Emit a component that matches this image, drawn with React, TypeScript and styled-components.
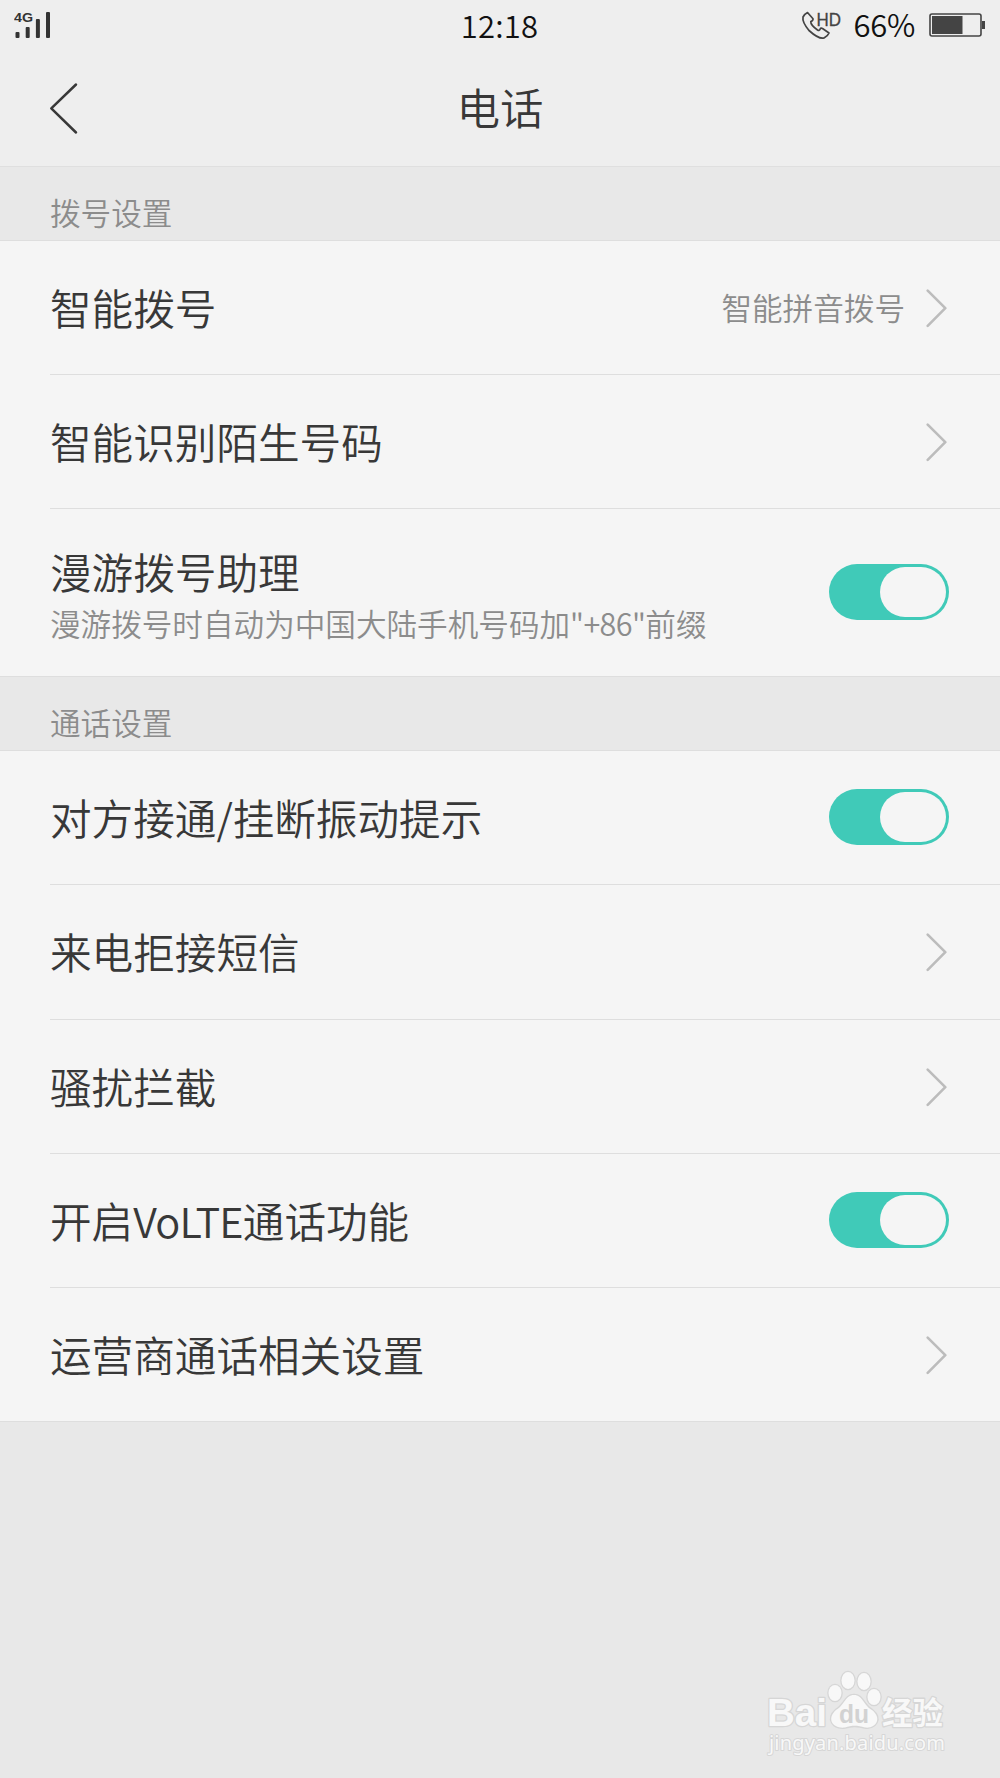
import React, { useState } from "react";
import styled, { createGlobalStyle } from "styled-components";

const GlobalStyle = createGlobalStyle`
  * { box-sizing: border-box; }
  body {
    margin: 0;
    background: #e8e8e8;
    font-family: "Noto Sans CJK SC", sans-serif;
    font-weight: 350;
    color: #383838;
  }
`;

const Screen = styled.div`
  display: flex;
  flex-direction: column;
  width: 1000px;
  height: 1778px;
  background: #e8e8e8;
  overflow: hidden;
`;

const Header = styled.header`
  height: 167px;
  background: #eeeeee;
  border-bottom: 1px solid #dfdfdf;
`;

const StatusBar = styled.div`
  display: grid;
  grid-template-columns: 1fr auto 1fr;
  height: 52px;
  padding: 0 15px 0 14px;
`;

const Clock = styled.span`
  font-size: 31px;
  line-height: 50px;
  letter-spacing: 0.2px;
  color: #111;
`;

const StatusRight = styled.div`
  display: flex;
  justify-content: flex-end;
  align-items: flex-start;
`;

const Percent = styled.span`
  font-size: 31px;
  line-height: 48px;
  letter-spacing: -0.3px;
  color: #111;
  margin: 0 14px 0 11px;
`;

const TitleBar = styled.div`
  display: grid;
  grid-template-columns: 100px 1fr 100px;
  height: 114px;
`;

const BackButton = styled.button`
  display: flex;
  border: 0;
  padding: 29px 0 0 48px;
  background: none;
`;

const Title = styled.h1`
  margin: 0;
  font-size: 43.5px;
  line-height: 110px;
  font-weight: 350;
  text-align: center;
`;

const SectionLabel = styled.h2`
  height: 74px;
  margin: 0;
  padding: 20px 0 0 50px;
  border-bottom: 1px solid #dedede;
  font-size: 30.6px;
  line-height: 50px;
  font-weight: 350;
  color: #8c8c8c;
`;

const List = styled.div`
  display: flex;
  flex-direction: column;
  background: #f5f5f5;
  border-bottom: 1px solid #dedede;
  padding-left: 50px;
`;

const Row = styled.div<{ $height: number }>`
  display: flex;
  align-items: center;
  justify-content: space-between;
  height: ${(p) => p.$height}px;
  padding-right: 51px;
  & + & { border-top: 1px solid #dedede; }
`;

const Texts = styled.div<{ $double: boolean }>`
  display: flex;
  flex-direction: column;
  white-space: nowrap;
  gap: 3px;
  padding-top: ${(p) => (p.$double ? 5 : 0)}px;
  padding-bottom: ${(p) => (p.$double ? 0 : 2)}px;
`;

const Label = styled.span`
  font-size: 41.6px;
  line-height: 52px;
`;

const Hint = styled.span`
  font-size: 30.6px;
  line-height: 46px;
  color: #8c8c8c;
`;

const Latin = styled.span`
  letter-spacing: -0.02em;
`;

const Value = styled(Hint)`
  padding-bottom: 2px;
`;

const Side = styled.div`
  display: flex;
  align-items: center;
  gap: 21px;
`;

const Toggle = styled.button<{ $on: boolean }>`
  display: flex;
  justify-content: ${(p) => (p.$on ? "flex-end" : "flex-start")};
  width: 120px;
  height: 56px;
  margin-bottom: 2px;
  padding: 3px;
  border: 0;
  border-radius: 28px;
  background: ${(p) => (p.$on ? "#40cab8" : "#cccccc")};
`;

const Knob = styled.span`
  width: 66px;
  height: 50px;
  border-radius: 25px;
  background: #f5f5f5;
`;

const Footer = styled.footer`
  display: flex;
  flex: 1;
  justify-content: flex-end;
  align-items: flex-end;
  padding: 0 50px 18px 0;
`;

const Signal = () => (
  <svg width="40" height="52" fill="#333">
    <text x="0" y="22" fontFamily="Liberation Sans" fontWeight="700" fontSize="13.5" textLength="19" lengthAdjust="spacingAndGlyphs">4G</text>
    <rect x="1.5" y="32" width="4" height="6" rx="1" />
    <rect x="11.7" y="27" width="4" height="11" rx="1" />
    <rect x="21.9" y="19" width="4" height="19" rx="1" />
    <rect x="32" y="12" width="4" height="26" rx="1" />
  </svg>
);

const HdCall = () => (
  <svg width="42" height="52" fill="none" stroke="#444" strokeWidth="1.7" strokeLinejoin="round">
    <path d="M6.5 12.5 L12 18.8 Q12.3 20.5 9.8 21.5 Q9.5 25 16.5 30 Q18.5 31.2 19.3 28.8 Q20 27.6 21.5 28.5 L28 33 Q27 35.8 23 38 Q18 39.5 8 30.5 Q1 22 2 17 Q3.5 14 6.5 12.5 Z" />
    <text x="15.5" y="25.7" fill="#444" strokeWidth="0.3" fontFamily="Liberation Sans" fontSize="18.8" textLength="24.5" lengthAdjust="spacingAndGlyphs">HD</text>
  </svg>
);

const Battery = () => (
  <svg width="56" height="52">
    <rect x="1" y="14" width="51" height="22" rx="2" fill="none" stroke="#444" strokeWidth="1.6" />
    <rect x="3" y="16" width="30.5" height="18" fill="#444" />
    <rect x="53" y="21" width="3" height="8" fill="#444" />
  </svg>
);

const Back = () => (
  <svg width="32" height="56" fill="none" stroke="#383838" strokeWidth="2.5" strokeLinecap="round" strokeLinejoin="round">
    <path d="M28 3.5 L3.3 27.3 L28 51.5" />
  </svg>
);

const Chevron = () => (
  <svg width="23" height="40" fill="none" stroke="#bcbcbc" strokeWidth="2.6" strokeLinecap="round" strokeLinejoin="round">
    <path d="M1.7 2.6 L19.3 20.2 L1.7 37.8" />
  </svg>
);

const Watermark = () => (
  <svg width="184" height="92" fill="#f8f8f8" stroke="#d6d6d6" strokeWidth="2.6" paintOrder="stroke" strokeLinejoin="round">
    <text x="1" y="58" fontFamily="Liberation Sans" fontWeight="700" fontSize="38" textLength="60" lengthAdjust="spacingAndGlyphs">Bai</text>
    <ellipse cx="69" cy="25" rx="6.5" ry="8" />
    <ellipse cx="82" cy="12.5" rx="6.5" ry="8.5" />
    <ellipse cx="98" cy="13.5" rx="6.5" ry="8.5" />
    <ellipse cx="108" cy="29" rx="6.5" ry="8" />
    <path d="M88 27 C97 27 97 37 106 42 C117 51 109 61 99 59.5 C91 57 86 57 79 59.5 C67 61 60 51 70 42 C79 37 79 27 88 27 Z" />
    <text x="73" y="55" fill="#d2d2d2" stroke="none" fontFamily="Liberation Sans" fontWeight="700" fontSize="25" textLength="30" lengthAdjust="spacingAndGlyphs">du</text>
    <text x="116" y="56" fontFamily="Noto Sans CJK SC" fontWeight="700" fontSize="31" textLength="61" lengthAdjust="spacingAndGlyphs">经验</text>
    <text x="3" y="82" fontFamily="Noto Sans" fontWeight="400" fontSize="20" textLength="176" lengthAdjust="spacing" strokeWidth="2">jingyan.baidu.com</text>
  </svg>
);

type Item = {
  label: React.ReactNode;
  hint?: React.ReactNode;
  value?: string;
  toggle?: boolean;
  height: number;
};

const dialing: Item[] = [
  { label: "智能拨号", value: "智能拼音拨号", height: 133 },
  { label: "智能识别陌生号码", height: 134 },
  {
    label: "漫游拨号助理",
    hint: <>漫游拨号时自动为中国大陆手机号码加<Latin>"+86"</Latin>前缀</>,
    toggle: true,
    height: 168,
  },
];

const calling: Item[] = [
  { label: "对方接通/挂断振动提示", toggle: true, height: 133 },
  { label: "来电拒接短信", height: 135 },
  { label: "骚扰拦截", height: 134 },
  { label: <>开启<Latin>VoLTE</Latin>通话功能</>, toggle: true, height: 134 },
  { label: "运营商通话相关设置", height: 134 },
];

const SettingRow = ({ item }: { item: Item }) => {
  const [on, setOn] = useState(true);
  return (
    <Row $height={item.height}>
      <Texts $double={Boolean(item.hint)}>
        <Label>{item.label}</Label>
        {item.hint && <Hint>{item.hint}</Hint>}
      </Texts>
      <Side>
        {item.value && <Value>{item.value}</Value>}
        {item.toggle ? (
          <Toggle $on={on} onClick={() => setOn(!on)}><Knob /></Toggle>
        ) : (
          <Chevron />
        )}
      </Side>
    </Row>
  );
};

export default function App() {
  return (
    <Screen>
      <GlobalStyle />
      <Header>
        <StatusBar>
          <Signal />
          <Clock>12:18</Clock>
          <StatusRight>
            <HdCall />
            <Percent>66%</Percent>
            <Battery />
          </StatusRight>
        </StatusBar>
        <TitleBar>
          <BackButton><Back /></BackButton>
          <Title>电话</Title>
        </TitleBar>
      </Header>
      <SectionLabel>拨号设置</SectionLabel>
      <List>{dialing.map((item, i) => <SettingRow key={i} item={item} />)}</List>
      <SectionLabel>通话设置</SectionLabel>
      <List>{calling.map((item, i) => <SettingRow key={i} item={item} />)}</List>
      <Footer><Watermark /></Footer>
    </Screen>
  );
}
